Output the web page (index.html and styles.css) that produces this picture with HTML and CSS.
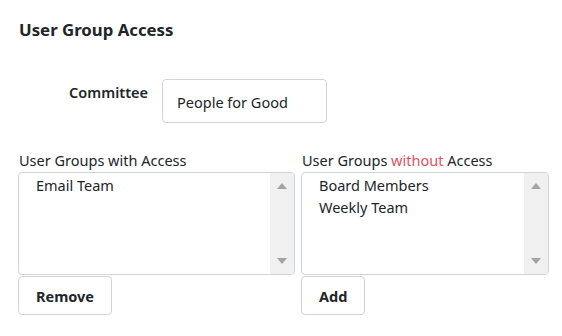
FILE: index.html
```html
<!DOCTYPE html>
<html lang="en">
<head>
  <meta charset="UTF-8">
  <title>User Group Access</title>
  <link rel="stylesheet" href="styles.css">
</head>
<body>
<div id="access-panel">
  <h2 class="panel-title">User Group Access</h2>
  <div class="committee-row">
    <label for="committee-input" class="committee-label">Committee</label>
    <input id="committee-input" type="text" value="People for Good" aria-label="Committee">
  </div>
  <div class="group-columns">
    <div class="group-col">
      <div class="group-label">User Groups with Access</div>
      <div class="group-list">
        <ul class="group-items">
          <li>Email Team</li>
        </ul>
        <div class="fake-scroll"><span class="arrow up"></span><span class="arrow down"></span></div>
      </div>
      <div><button class="btn">Remove</button></div>
    </div>
    <div class="group-col">
      <div class="group-label">User Groups <span class="warn">without</span> Access</div>
      <div class="group-list">
        <ul class="group-items">
          <li>Board Members</li>
          <li>Weekly Team</li>
        </ul>
        <div class="fake-scroll"><span class="arrow up"></span><span class="arrow down"></span></div>
      </div>
      <div><button class="btn">Add</button></div>
    </div>
  </div>
</div>
</body>
</html>
```

FILE: styles.css
```css
body{margin:0;background:#fff;color:#212529;font-family:"Noto Sans","Open Sans",sans-serif;font-size:14.5px;}
#access-panel{padding:18px 13px 0 18px;}
.panel-title{margin:0 0 0 1px;font-size:16.8px;font-weight:700;line-height:24px;}
.committee-row{display:flex;align-items:flex-start;margin-top:37px;}
.committee-label{width:130px;text-align:right;padding-top:3px;padding-right:14px;font-weight:600;line-height:20px;}
#committee-input{width:165px;height:44px;box-sizing:border-box;border:1px solid #ced4da;border-radius:4px;padding:2px 14px 0;font:inherit;color:#212529;}
.group-columns{display:grid;grid-template-columns:277px 248px;column-gap:6px;margin-top:25px;}
.group-label{line-height:20px;padding:2px 0 2px 1px;}
.warn{color:#e0505e;}
.group-list{display:flex;height:103px;box-sizing:border-box;border:1px solid #ced4da;border-radius:4px;overflow:hidden;}
.group-items{flex:1;list-style:none;margin:0;padding:1px 0 0 17px;}
.group-items li{line-height:22px;}
.fake-scroll{width:24px;background:#f0f0f0;display:flex;flex-direction:column;justify-content:space-between;align-items:center;padding:10px 0 10px;}
.arrow{width:0;height:0;border-left:5px solid transparent;border-right:5px solid transparent;}
.arrow.up{border-bottom:6px solid #a3a3a3;}
.arrow.down{border-top:6px solid #a3a3a3;}
.btn{margin-top:1px;height:39px;box-sizing:border-box;padding:0 17px;background:#fff;border:1px solid #ced4da;border-radius:4px;font:inherit;font-weight:700;color:#212529;}
```
